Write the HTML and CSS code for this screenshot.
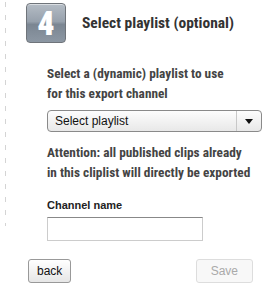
FILE: index.html
```html
<!DOCTYPE html>
<html lang="en">
<head>
    <meta charset="UTF-8">
    <meta name="viewport" content="width=device-width, initial-scale=1.0">
    <title>Select playlist</title>
    <link rel="stylesheet" href="styles.css">
</head>
<body>
    <div class="wizard">
        <div class="step">
            <div class="step-head">
                <div class="step-num">4</div>
                <h2>Select playlist (optional)</h2>
            </div>
            <div class="step-body">
                <p class="hint">Select a (dynamic) playlist to use<br>for this export channel</p>
                <div class="select">
                    <span class="select-label">Select playlist</span>
                    <span class="select-arrow"></span>
                </div>
                <p class="hint">Attention: all published clips already<br>in this cliplist will directly be exported</p>
                <label for="channelName">Channel name</label>
                <input type="text" id="channelName">
            </div>
        </div>
        <div class="actions">
            <button type="button" class="btn">back</button>
            <button type="button" class="btn" disabled>Save</button>
        </div>
    </div>
</body>
</html>
```

FILE: styles.css
```css
body {
    margin: 0;
    background: #fff;
    font-family: "Liberation Sans", Arial, sans-serif;
    color: #333;
}
.wizard {
    width: 269px;
}
.step {
    margin-left: 5px;
    padding: 3px 0 0 21px;
    /* dashed guide line, stops short of the input like the original */
    background: repeating-linear-gradient(#d4d4d4 0 5px, transparent 5px 13px) 0 2px / 1px 224px no-repeat;
}
.step-head {
    display: flex;
    align-items: center;
    gap: 16px;
}
.step-num {
    width: 38px;
    height: 38px;
    border: 1px solid #6f747a;
    border-radius: 4px;
    background: linear-gradient(#b4bcc5 0%, #97a1ac 46%, #7b8692 54%, #8c97a3 100%);
    color: #fff;
    font: 900 34px/38px Roboto, sans-serif;
    font-stretch: condensed;
    text-align: center;
    box-shadow: inset 0 1px 0 rgba(255,255,255,0.5);
}
h2 {
    margin: 0;
    font: bold 15.5px Roboto, sans-serif;
    font-stretch: condensed;
    color: #333;
}
.step-body {
    padding: 21px 0 12px 21px;
    width: 215px;
}
.hint {
    margin: 0;
    font: bold 13.3px/20px Roboto, sans-serif;
    font-stretch: condensed;
    color: #444;
}
.select {
    display: flex;
    height: 20px;
    margin: 6px 0 11px;
    border: 1px solid #8a8a8a;
    border-radius: 4px;
    background: linear-gradient(#fdfdfd, #e8e8e8);
    font-size: 12px;
    color: #111;
}
.select-label {
    flex: 1;
    padding-left: 7px;
    line-height: 20px;
}
.select-arrow {
    width: 24px;
    border-left: 1px solid #c8c8c8;
    position: relative;
}
.select-arrow::after {
    content: "";
    position: absolute;
    left: 8px;
    top: 8px;
    border-left: 4px solid transparent;
    border-right: 4px solid transparent;
    border-top: 5px solid #111;
}
label {
    display: block;
    margin-top: 16px;
    font-weight: bold;
    font-size: 11px;
    color: #222;
}
input {
    display: block;
    box-sizing: border-box;
    width: 156px;
    height: 24px;
    margin-top: 6px;
    border: 1px solid #ccc;
    border-top-color: #888;
}
.actions {
    display: flex;
    justify-content: space-between;
    padding: 6px 16px 0 28px;
}
.btn {
    height: 24px;
    padding: 0 8px;
    border: 1px solid #999;
    border-radius: 3px;
    background: linear-gradient(#fff, #e6e6e6);
    font-family: "Liberation Sans", Arial, sans-serif;
    font-size: 12px;
    color: #111;
}
.btn:disabled {
    border-color: #ddd;
    background: #f8f8f8;
    color: #aaa;
    padding: 0 14px;
}
```
